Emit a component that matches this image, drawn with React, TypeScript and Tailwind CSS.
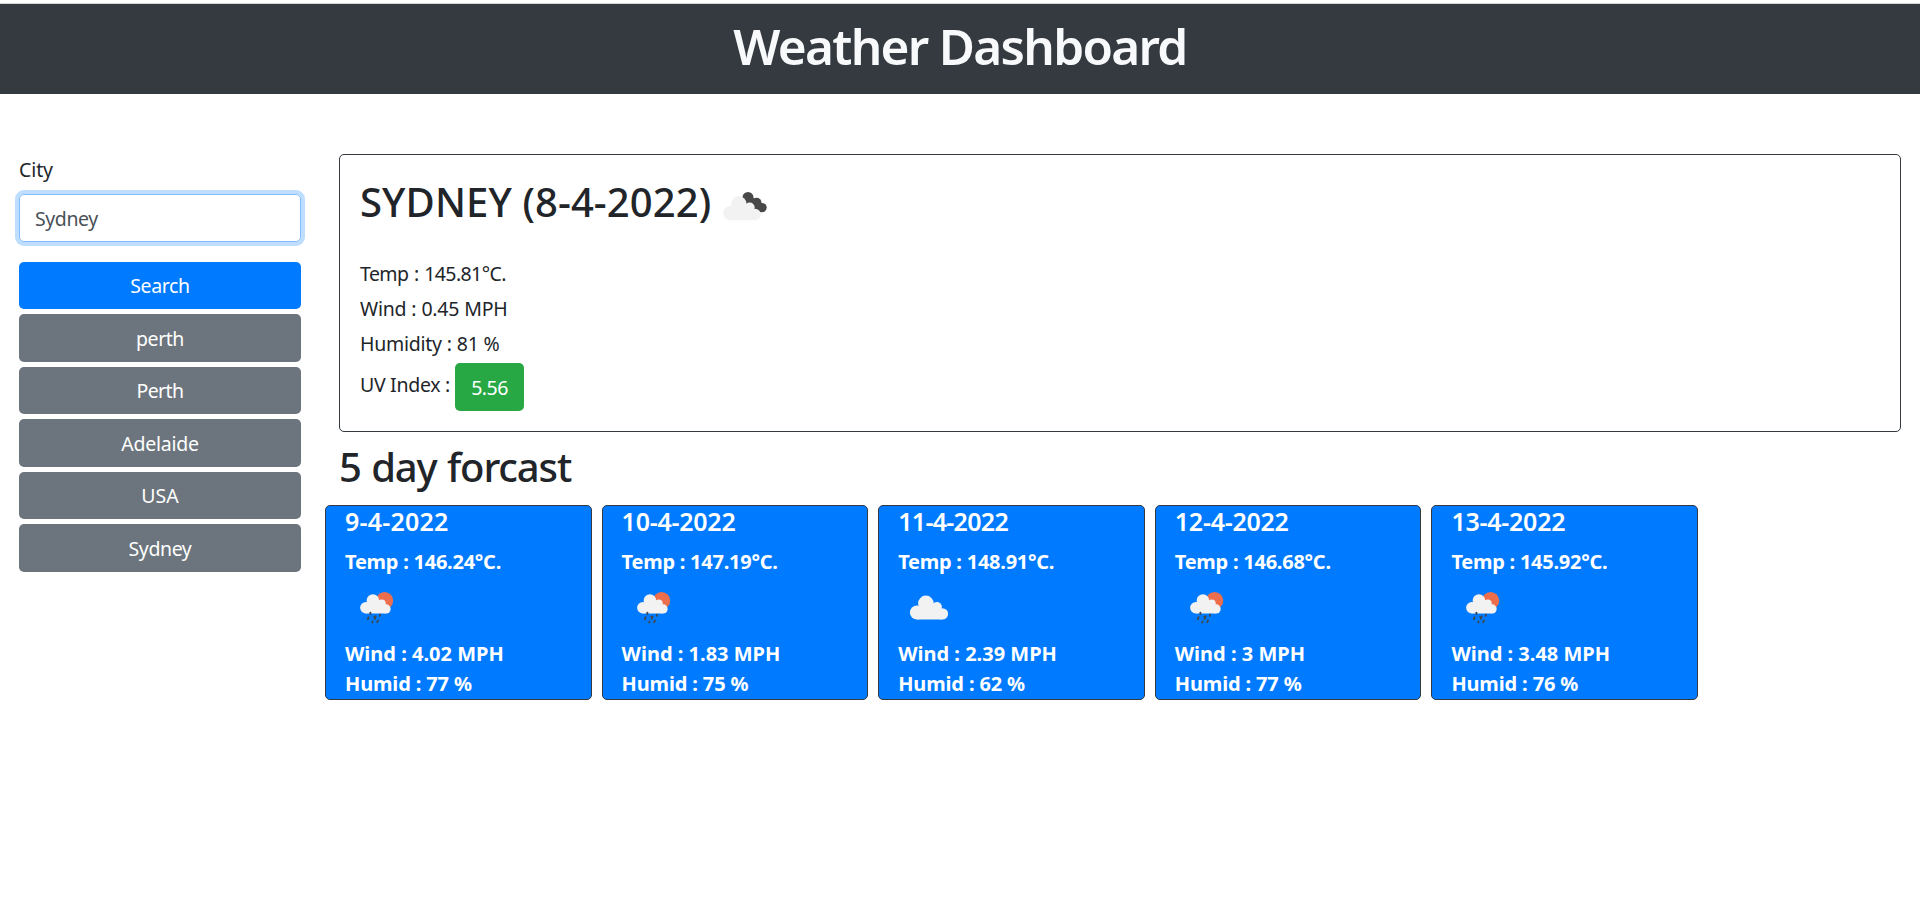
function CloudShape({ transform }: { transform?: string }) {
  return (
    <g fill="#f2f2f2" transform={transform}>
      <circle cx="19" cy="36.5" r="7.1" />
      <circle cx="27.9" cy="27.4" r="7.8" />
      <circle cx="38.9" cy="31" r="5" />
      <circle cx="44.4" cy="37.9" r="5.7" />
      <path d="M19 30h9l7-2 9 8v7.6H19z" />
    </g>
  );
}

function CloudIcon() {
  return (
    <svg viewBox="0 0 62.5 62.5" className="size-[62.5px] shrink-0">
      <CloudShape />
    </svg>
  );
}

function BrokenCloudsIcon() {
  return (
    <svg viewBox="0 0 62.5 62.5" className="size-[62.5px] shrink-0">
      <g fill="#484848">
        <circle cx="35" cy="22.4" r="5.5" />
        <circle cx="43.6" cy="27.6" r="4.9" />
        <circle cx="49" cy="32.6" r="4.7" />
        <path d="M35 20.5l5.5 2.6 8 6.5-1 7.6-8-3-9-8z" />
      </g>
      <CloudShape transform="translate(-1.6 1.6) scale(.985 1)" />
    </svg>
  );
}

function SunRainIcon() {
  return (
    <svg viewBox="0 0 62.5 62.5" className="size-[62.5px] shrink-0">
      <circle cx="39.6" cy="24.7" r="8.6" fill="#ec6e4c" />
      <CloudShape transform="translate(5.6 2.6) scale(.8)" />
      <path
        d="M25.4 36.6v1.4M23.6 41.2l-.7 2M30.6 40.6l-.9 2.2M35 38.6l-.2 1.2M27.6 45.6l-.4.8M33 44.6l-.8 1.6M29.2 40.6l1.4.4"
        stroke="#3d4852"
        strokeWidth="1.9"
        strokeLinecap="round"
        fill="none"
      />
    </svg>
  );
}

const history = [
  { name: "perth", tracking: "tracking-[-0.45px]" },
  { name: "Perth", tracking: "tracking-[-0.6px]" },
  { name: "Adelaide", tracking: "tracking-[-0.25px]" },
  { name: "USA", tracking: "tracking-normal" },
  { name: "Sydney", tracking: "tracking-[-0.4px]" },
];

const days = [
  { date: "9-4-2022", temp: "146.24", wind: "4.02", humid: "77", rain: true, tracking: "tracking-[0.2px]" },
  { date: "10-4-2022", temp: "147.19", wind: "1.83", humid: "75", rain: true, tracking: "tracking-[-0.25px]" },
  { date: "11-4-2022", temp: "148.91", wind: "2.39", humid: "62", rain: false, tracking: "tracking-[-0.7px]" },
  { date: "12-4-2022", temp: "146.68", wind: "3", humid: "77", rain: true, tracking: "tracking-[-0.25px]" },
  { date: "13-4-2022", temp: "145.92", wind: "3.48", humid: "76", rain: true, tracking: "tracking-[-0.25px]" },
];

export default function App() {
  return (
    <div className="min-h-screen bg-white pt-[3px] font-['Noto_Sans',sans-serif] text-[19.5px] leading-[30px] text-[#212529]">
      <header className="h-[91px] border-t border-[#d3d4d5] bg-[#343a40] pt-[12px] text-center">
        <h1 className="text-[49.5px] leading-[60px] font-semibold tracking-[-1.7px] text-[#f8f9fa]">
          Weather Dashboard
        </h1>
      </header>

      <div className="flex pt-[60px] pr-[19px] pl-[19px]">
        <aside className="w-[282px] shrink-0">
          <label htmlFor="city" className="block pt-px tracking-[-0.1px]">City</label>
          <input
            id="city"
            defaultValue="Sydney"
            className="mt-[9px] block h-12 w-full rounded-[5px] border border-[#80bdff] px-[15px] tracking-[-0.4px] text-[#495057] shadow-[0_0_0_4px_#bfdeff] outline-none"
          />
          <div className="mt-[19.75px] flex flex-col gap-[5px]">
            <button className="h-[47.5px] rounded-[5px] bg-[#007bff] tracking-[-0.35px] text-white">Search</button>
            {history.map((city) => (
              <button key={city.name} className={`h-[47.5px] rounded-[5px] bg-[#6c757d] pt-px text-white ${city.tracking}`}>
                {city.name}
              </button>
            ))}
          </div>
        </aside>

        <main className="ml-[38px] min-w-0 grow">
          <section className="h-[277.5px] rounded-[5px] border border-[#343a40] px-5 pt-5">
            <div className="flex h-[84px] items-start">
              <h2 className="pt-[3px] text-[40px] leading-[48px] font-medium tracking-[0.1px] whitespace-nowrap">
                SYDNEY (8-4-2022)
              </h2>
              <div className="ml-[1.5px]">
                <BrokenCloudsIcon />
              </div>
            </div>
            <div className="flex flex-col gap-[5px]">
              <p className="tracking-[-0.6px] [word-spacing:1.2px]">Temp : 145.81°C.</p>
              <p className="tracking-[-0.25px] [word-spacing:0.3px]">Wind : 0.45 MPH</p>
              <p className="tracking-[-0.25px] [word-spacing:0.2px]">Humidity : 81 %</p>
              <div className="flex items-start gap-[5px]">
                <p className="w-[90px] pt-[6px] tracking-[-0.3px] whitespace-nowrap">UV Index :</p>
                <span className="-mt-px flex h-[47.5px] w-[69px] items-center justify-center rounded-[5px] bg-[#28a745] pt-[2px] tracking-[-0.5px] text-white">
                  5.56
                </span>
              </div>
            </div>
          </section>

          <h2 className="mt-[11.5px] text-[40px] leading-[48px] font-medium tracking-[-1.15px] [word-spacing:1.2px]">
            5 day forcast
          </h2>

          <div className="mt-[14px] -ml-[14px] flex gap-[10px]">
            {days.map((day) => (
              <article
                key={day.date}
                className="h-[195px] w-[266.6px] rounded-[5px] border border-[#343a40] bg-[#007bff] pl-[19px] text-[20px] font-bold text-white"
              >
                <h5 className={`mb-[10px] text-[25px] leading-[30px] font-semibold ${day.tracking}`}>{day.date}</h5>
                <p className="translate-y-px tracking-[-0.25px]">Temp : {day.temp}°C.</p>
                {day.rain ? <SunRainIcon /> : <CloudIcon />}
                <p>Wind : {day.wind} MPH</p>
                <p className="tracking-[-0.15px]">Humid : {day.humid} %</p>
              </article>
            ))}
          </div>
        </main>
      </div>
    </div>
  );
}
